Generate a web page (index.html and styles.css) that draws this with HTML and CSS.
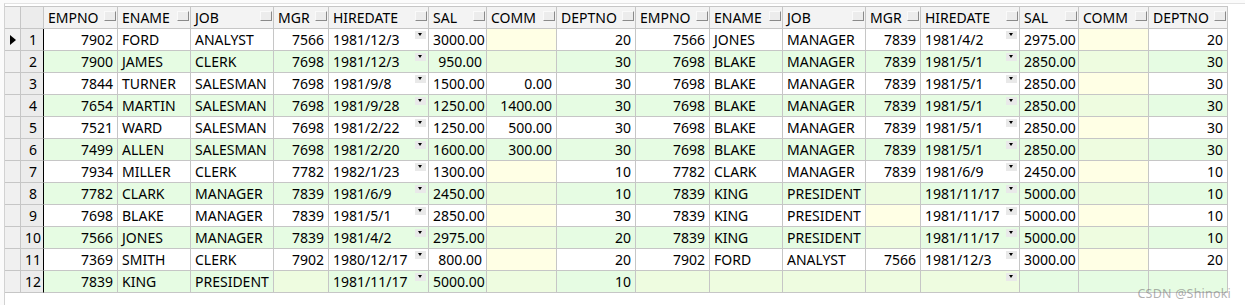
FILE: index.html
```html
<!DOCTYPE html>
<html>
<head>
<meta charset="utf-8">
<link rel="stylesheet" href="styles.css">
</head>
<body>
<div class="frame">
  <div class="grid">
    <div class="row head">
      <div class="cell ind"></div><div class="cell num"></div>
      <div class="cell hd"><span>EMPNO</span><i class="sb"></i></div>
      <div class="cell hd"><span>ENAME</span><i class="sb"></i></div>
      <div class="cell hd"><span>JOB</span><i class="sb"></i></div>
      <div class="cell hd"><span>MGR</span><i class="sb"></i></div>
      <div class="cell hd"><span>HIREDATE</span><i class="sb"></i></div>
      <div class="cell hd"><span>SAL</span><i class="sb"></i></div>
      <div class="cell hd"><span>COMM</span><i class="sb"></i></div>
      <div class="cell hd"><span>DEPTNO</span><i class="sb"></i></div>
      <div class="cell hd"><span>EMPNO</span><i class="sb"></i></div>
      <div class="cell hd"><span>ENAME</span><i class="sb"></i></div>
      <div class="cell hd"><span>JOB</span><i class="sb"></i></div>
      <div class="cell hd"><span>MGR</span><i class="sb"></i></div>
      <div class="cell hd"><span>HIREDATE</span><i class="sb"></i></div>
      <div class="cell hd"><span>SAL</span><i class="sb"></i></div>
      <div class="cell hd"><span>COMM</span><i class="sb"></i></div>
      <div class="cell hd"><span>DEPTNO</span><i class="sb"></i></div>
    </div>

    <div class="row odd">
      <div class="cell ind"><svg width="6" height="10" viewBox="0 0 6 10"><polygon points="0,0 6,5 0,10" fill="#000"/></svg></div><div class="cell num">1</div>
      <div class="cell r">7902</div><div class="cell">FORD</div><div class="cell">ANALYST</div><div class="cell r">7566</div><div class="cell dt"><span>1981/12/3</span><i class="dd"></i></div><div class="cell r">3000.00</div><div class="cell nul"></div><div class="cell r">20</div>
      <div class="cell r">7566</div><div class="cell">JONES</div><div class="cell">MANAGER</div><div class="cell r">7839</div><div class="cell dt"><span>1981/4/2</span><i class="dd"></i></div><div class="cell r">2975.00</div><div class="cell nul"></div><div class="cell r">20</div>
    </div>
    <div class="row even">
      <div class="cell ind"></div><div class="cell num">2</div>
      <div class="cell r">7900</div><div class="cell">JAMES</div><div class="cell">CLERK</div><div class="cell r">7698</div><div class="cell dt"><span>1981/12/3</span><i class="dd"></i></div><div class="cell r">950.00</div><div class="cell nul"></div><div class="cell r">30</div>
      <div class="cell r">7698</div><div class="cell">BLAKE</div><div class="cell">MANAGER</div><div class="cell r">7839</div><div class="cell dt"><span>1981/5/1</span><i class="dd"></i></div><div class="cell r">2850.00</div><div class="cell nul"></div><div class="cell r">30</div>
    </div>
    <div class="row odd">
      <div class="cell ind"></div><div class="cell num">3</div>
      <div class="cell r">7844</div><div class="cell">TURNER</div><div class="cell">SALESMAN</div><div class="cell r">7698</div><div class="cell dt"><span>1981/9/8</span><i class="dd"></i></div><div class="cell r">1500.00</div><div class="cell r">0.00</div><div class="cell r">30</div>
      <div class="cell r">7698</div><div class="cell">BLAKE</div><div class="cell">MANAGER</div><div class="cell r">7839</div><div class="cell dt"><span>1981/5/1</span><i class="dd"></i></div><div class="cell r">2850.00</div><div class="cell nul"></div><div class="cell r">30</div>
    </div>
    <div class="row even">
      <div class="cell ind"></div><div class="cell num">4</div>
      <div class="cell r">7654</div><div class="cell">MARTIN</div><div class="cell">SALESMAN</div><div class="cell r">7698</div><div class="cell dt"><span>1981/9/28</span><i class="dd"></i></div><div class="cell r">1250.00</div><div class="cell r">1400.00</div><div class="cell r">30</div>
      <div class="cell r">7698</div><div class="cell">BLAKE</div><div class="cell">MANAGER</div><div class="cell r">7839</div><div class="cell dt"><span>1981/5/1</span><i class="dd"></i></div><div class="cell r">2850.00</div><div class="cell nul"></div><div class="cell r">30</div>
    </div>
    <div class="row odd">
      <div class="cell ind"></div><div class="cell num">5</div>
      <div class="cell r">7521</div><div class="cell">WARD</div><div class="cell">SALESMAN</div><div class="cell r">7698</div><div class="cell dt"><span>1981/2/22</span><i class="dd"></i></div><div class="cell r">1250.00</div><div class="cell r">500.00</div><div class="cell r">30</div>
      <div class="cell r">7698</div><div class="cell">BLAKE</div><div class="cell">MANAGER</div><div class="cell r">7839</div><div class="cell dt"><span>1981/5/1</span><i class="dd"></i></div><div class="cell r">2850.00</div><div class="cell nul"></div><div class="cell r">30</div>
    </div>
    <div class="row even">
      <div class="cell ind"></div><div class="cell num">6</div>
      <div class="cell r">7499</div><div class="cell">ALLEN</div><div class="cell">SALESMAN</div><div class="cell r">7698</div><div class="cell dt"><span>1981/2/20</span><i class="dd"></i></div><div class="cell r">1600.00</div><div class="cell r">300.00</div><div class="cell r">30</div>
      <div class="cell r">7698</div><div class="cell">BLAKE</div><div class="cell">MANAGER</div><div class="cell r">7839</div><div class="cell dt"><span>1981/5/1</span><i class="dd"></i></div><div class="cell r">2850.00</div><div class="cell nul"></div><div class="cell r">30</div>
    </div>
    <div class="row odd">
      <div class="cell ind"></div><div class="cell num">7</div>
      <div class="cell r">7934</div><div class="cell">MILLER</div><div class="cell">CLERK</div><div class="cell r">7782</div><div class="cell dt"><span>1982/1/23</span><i class="dd"></i></div><div class="cell r">1300.00</div><div class="cell nul"></div><div class="cell r">10</div>
      <div class="cell r">7782</div><div class="cell">CLARK</div><div class="cell">MANAGER</div><div class="cell r">7839</div><div class="cell dt"><span>1981/6/9</span><i class="dd"></i></div><div class="cell r">2450.00</div><div class="cell nul"></div><div class="cell r">10</div>
    </div>
    <div class="row even">
      <div class="cell ind"></div><div class="cell num">8</div>
      <div class="cell r">7782</div><div class="cell">CLARK</div><div class="cell">MANAGER</div><div class="cell r">7839</div><div class="cell dt"><span>1981/6/9</span><i class="dd"></i></div><div class="cell r">2450.00</div><div class="cell nul"></div><div class="cell r">10</div>
      <div class="cell r">7839</div><div class="cell">KING</div><div class="cell">PRESIDENT</div><div class="cell nul"></div><div class="cell dt"><span>1981/11/17</span><i class="dd"></i></div><div class="cell r">5000.00</div><div class="cell nul"></div><div class="cell r">10</div>
    </div>
    <div class="row odd">
      <div class="cell ind"></div><div class="cell num">9</div>
      <div class="cell r">7698</div><div class="cell">BLAKE</div><div class="cell">MANAGER</div><div class="cell r">7839</div><div class="cell dt"><span>1981/5/1</span><i class="dd"></i></div><div class="cell r">2850.00</div><div class="cell nul"></div><div class="cell r">30</div>
      <div class="cell r">7839</div><div class="cell">KING</div><div class="cell">PRESIDENT</div><div class="cell nul"></div><div class="cell dt"><span>1981/11/17</span><i class="dd"></i></div><div class="cell r">5000.00</div><div class="cell nul"></div><div class="cell r">10</div>
    </div>
    <div class="row even">
      <div class="cell ind"></div><div class="cell num">10</div>
      <div class="cell r">7566</div><div class="cell">JONES</div><div class="cell">MANAGER</div><div class="cell r">7839</div><div class="cell dt"><span>1981/4/2</span><i class="dd"></i></div><div class="cell r">2975.00</div><div class="cell nul"></div><div class="cell r">20</div>
      <div class="cell r">7839</div><div class="cell">KING</div><div class="cell">PRESIDENT</div><div class="cell nul"></div><div class="cell dt"><span>1981/11/17</span><i class="dd"></i></div><div class="cell r">5000.00</div><div class="cell nul"></div><div class="cell r">10</div>
    </div>
    <div class="row odd">
      <div class="cell ind"></div><div class="cell num">11</div>
      <div class="cell r">7369</div><div class="cell">SMITH</div><div class="cell">CLERK</div><div class="cell r">7902</div><div class="cell dt"><span>1980/12/17</span><i class="dd"></i></div><div class="cell r">800.00</div><div class="cell nul"></div><div class="cell r">20</div>
      <div class="cell r">7902</div><div class="cell">FORD</div><div class="cell">ANALYST</div><div class="cell r">7566</div><div class="cell dt"><span>1981/12/3</span><i class="dd"></i></div><div class="cell r">3000.00</div><div class="cell nul"></div><div class="cell r">20</div>
    </div>
    <div class="row even">
      <div class="cell ind"></div><div class="cell num">12</div>
      <div class="cell r">7839</div><div class="cell">KING</div><div class="cell">PRESIDENT</div><div class="cell nul"></div><div class="cell dt"><span>1981/11/17</span><i class="dd"></i></div><div class="cell r">5000.00</div><div class="cell nul"></div><div class="cell r">10</div>
      <div class="cell nul"></div><div class="cell nul"></div><div class="cell nul"></div><div class="cell nul"></div><div class="cell dt nul"><span></span><i class="dd"></i></div><div class="cell"></div><div class="cell"></div><div class="cell"></div>
    </div>
  </div>
  <div class="mark">CSDN @Shinoki</div>
</div>
</body>
</html>
```

FILE: styles.css
```css
html, body {
  margin: 0;
  padding: 0;
}
body {
  width: 1245px;
  height: 305px;
  overflow: hidden;
  font-family: "Noto Sans", "DejaVu Sans", sans-serif;
  font-size: 14px;
  color: #000;
  background: #fbfbfb;
}
.frame {
  position: relative;
  margin: 3px 0 0 4px;
  height: 302px;
  padding-top: 2px;
  box-sizing: border-box;
  border-left: 1px solid #d2d2d2;
  border-top: 1px solid #e2e2e2;
  background: #ffffff;
}
.grid {
  width: 1223px;
  border-top: 1px solid #c6c6c6;
}
.row {
  display: grid;
  grid-template-columns: 16px 23px 74px 73px 83px 55px 100px 58px 70px 79px 74px 73px 83px 55px 99px 59px 70px 79px;
  height: 22px;
}
.cell {
  box-sizing: border-box;
  height: 22px;
  line-height: 21px;
  padding: 0 4px;
  border-right: 1px solid #c6c6c6;
  border-bottom: 1px solid #c6c6c6;
  white-space: nowrap;
  overflow: hidden;
  text-align: left;
}
.cell.r { text-align: right; }

.even .cell { background: #e6fce3; }
.odd .cell { background: #ffffff; }
.odd .cell.nul { background: #ffffe5; }
.even .cell.nul { background: #eefce0; }

.cell.ind {
  padding: 0;
  background: #f0f0f0;
  display: flex;
  align-items: center;
  justify-content: center;
}
.row .cell.ind { background: #f0f0f0; }
.row .cell.num {
  background: #ececec;
  text-align: right;
  padding-right: 6px;
  border-right-color: #000;
}
.head .cell {
  background: #f3f3f3;
}
.head .cell.num { border-right-color: #c6c6c6; }

.cell.hd {
  display: flex;
  justify-content: space-between;
  align-items: flex-start;
}
.sb {
  display: block;
  box-sizing: border-box;
  width: 12px;
  height: 10px;
  margin-top: 4px;
  margin-right: -3px;
  border-top: 1px solid #fafafa;
  border-left: 1px solid #fafafa;
  border-right: 1px solid #8a8a8a;
  border-bottom: 1px solid #8a8a8a;
  background: #ececec;
}
.cell.dt {
  display: flex;
  justify-content: space-between;
  align-items: flex-start;
}
.dd {
  display: block;
  position: relative;
  width: 11px;
  height: 8px;
  margin-top: 2px;
  margin-right: -2px;
  background: #e9e9e9;
}
.dd::after {
  content: "";
  position: absolute;
  left: 3px;
  top: 2px;
  border-left: 2.5px solid transparent;
  border-right: 2.5px solid transparent;
  border-top: 3px solid #000;
}
.mark {
  position: absolute;
  right: 14px;
  top: 281px;
  font-size: 12.5px;
  color: rgba(110, 110, 110, 0.55);
  letter-spacing: 0.2px;
}
```
